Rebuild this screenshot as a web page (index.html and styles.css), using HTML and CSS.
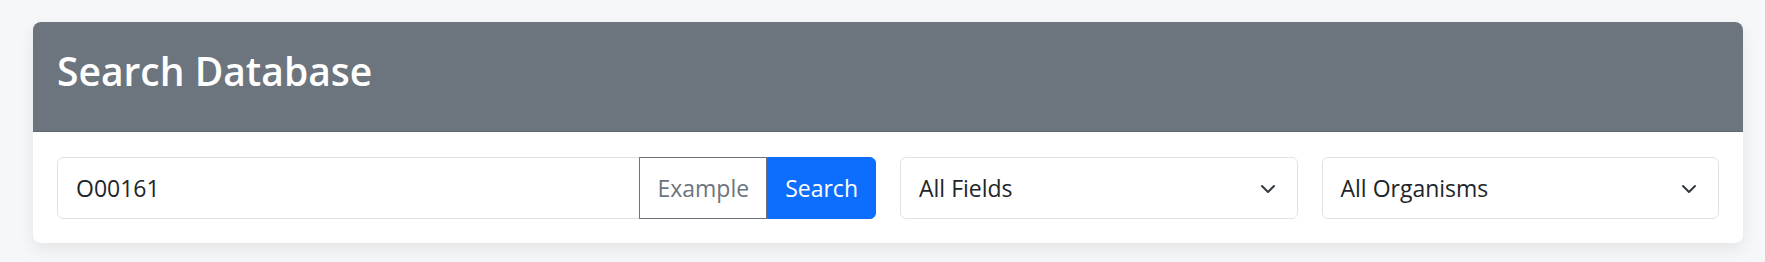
FILE: index.html
```html
<!DOCTYPE html>
<html lang="en">
<head>
    <meta charset="UTF-8">
    <meta name="viewport" content="width=device-width, initial-scale=1.0">
    <title>Search Database</title>
    <link rel="stylesheet" href="styles.css">
</head>
<body>
    <div class="card">
        <div class="card-header">
            <h2>Search Database</h2>
        </div>
        <div class="card-body">
            <div class="search-group">
                <input type="text" class="search-input" value="O00161">
                <button class="btn btn-example">Example</button>
                <button class="btn btn-search">Search</button>
            </div>
            <div class="select-box">
                <span>All Fields</span>
                <svg width="16" height="16" viewBox="0 0 16 16"><path d="M2 5l6 6 6-6" fill="none" stroke="#343a40" stroke-width="2" stroke-linecap="round" stroke-linejoin="round"/></svg>
            </div>
            <div class="select-box">
                <span>All Organisms</span>
                <svg width="16" height="16" viewBox="0 0 16 16"><path d="M2 5l6 6 6-6" fill="none" stroke="#343a40" stroke-width="2" stroke-linecap="round" stroke-linejoin="round"/></svg>
            </div>
        </div>
    </div>
</body>
</html>
```

FILE: styles.css
```css
body {
    margin: 0;
    padding: 22px 22px 22px 33px;
    background-color: #f6f7f9;
    font-family: "Open Sans", "Noto Sans", sans-serif;
    color: #212529;
}
.card {
    background-color: #fff;
    border-radius: 8px;
    box-shadow: 0 6px 16px rgba(0, 0, 0, 0.08);
    overflow: hidden;
}
.card-header {
    background-color: #6c757d;
    height: 109px;
    border-bottom: 1px solid #5f676e;
    border-radius: 3px 3px 0 0;
    padding: 0 24px;
    display: flex;
    align-items: center;
}
.card-header h2 {
    margin: 0 0 10px 0;
    color: #fff;
    font-size: 39px;
    font-weight: 600;
    line-height: 1.2;
}
.card-body {
    display: grid;
    grid-template-columns: repeat(12, 1fr);
    gap: 24px;
    padding: 25px 24px 24px 24px;
}
.search-group {
    grid-column: span 6;
    display: flex;
    height: 62px;
}
.search-input {
    flex: 1;
    min-width: 0;
    border: 1px solid #dee2e6;
    border-radius: 6px 0 0 6px;
    padding: 0 18px;
    font-family: inherit;
    font-size: 23px;
    color: #212529;
    outline: none;
}
.btn {
    font-family: inherit;
    font-size: 23px;
    padding: 0 17px;
    border: 1px solid transparent;
    cursor: pointer;
}
.btn-example {
    background-color: #fff;
    border-color: #6c757d;
    color: #6c757d;
    margin-left: -1px;
}
.btn-search {
    background-color: #0d6efd;
    border-color: #0d6efd;
    color: #fff;
    border-radius: 0 6px 6px 0;
}
.select-box {
    grid-column: span 3;
    height: 62px;
    box-sizing: border-box;
    border: 1px solid #dee2e6;
    border-radius: 6px;
    padding: 0 21px 0 18px;
    display: flex;
    align-items: center;
    justify-content: space-between;
    font-size: 23px;
}
.select-box svg {
    margin-top: 2px;
}
```
